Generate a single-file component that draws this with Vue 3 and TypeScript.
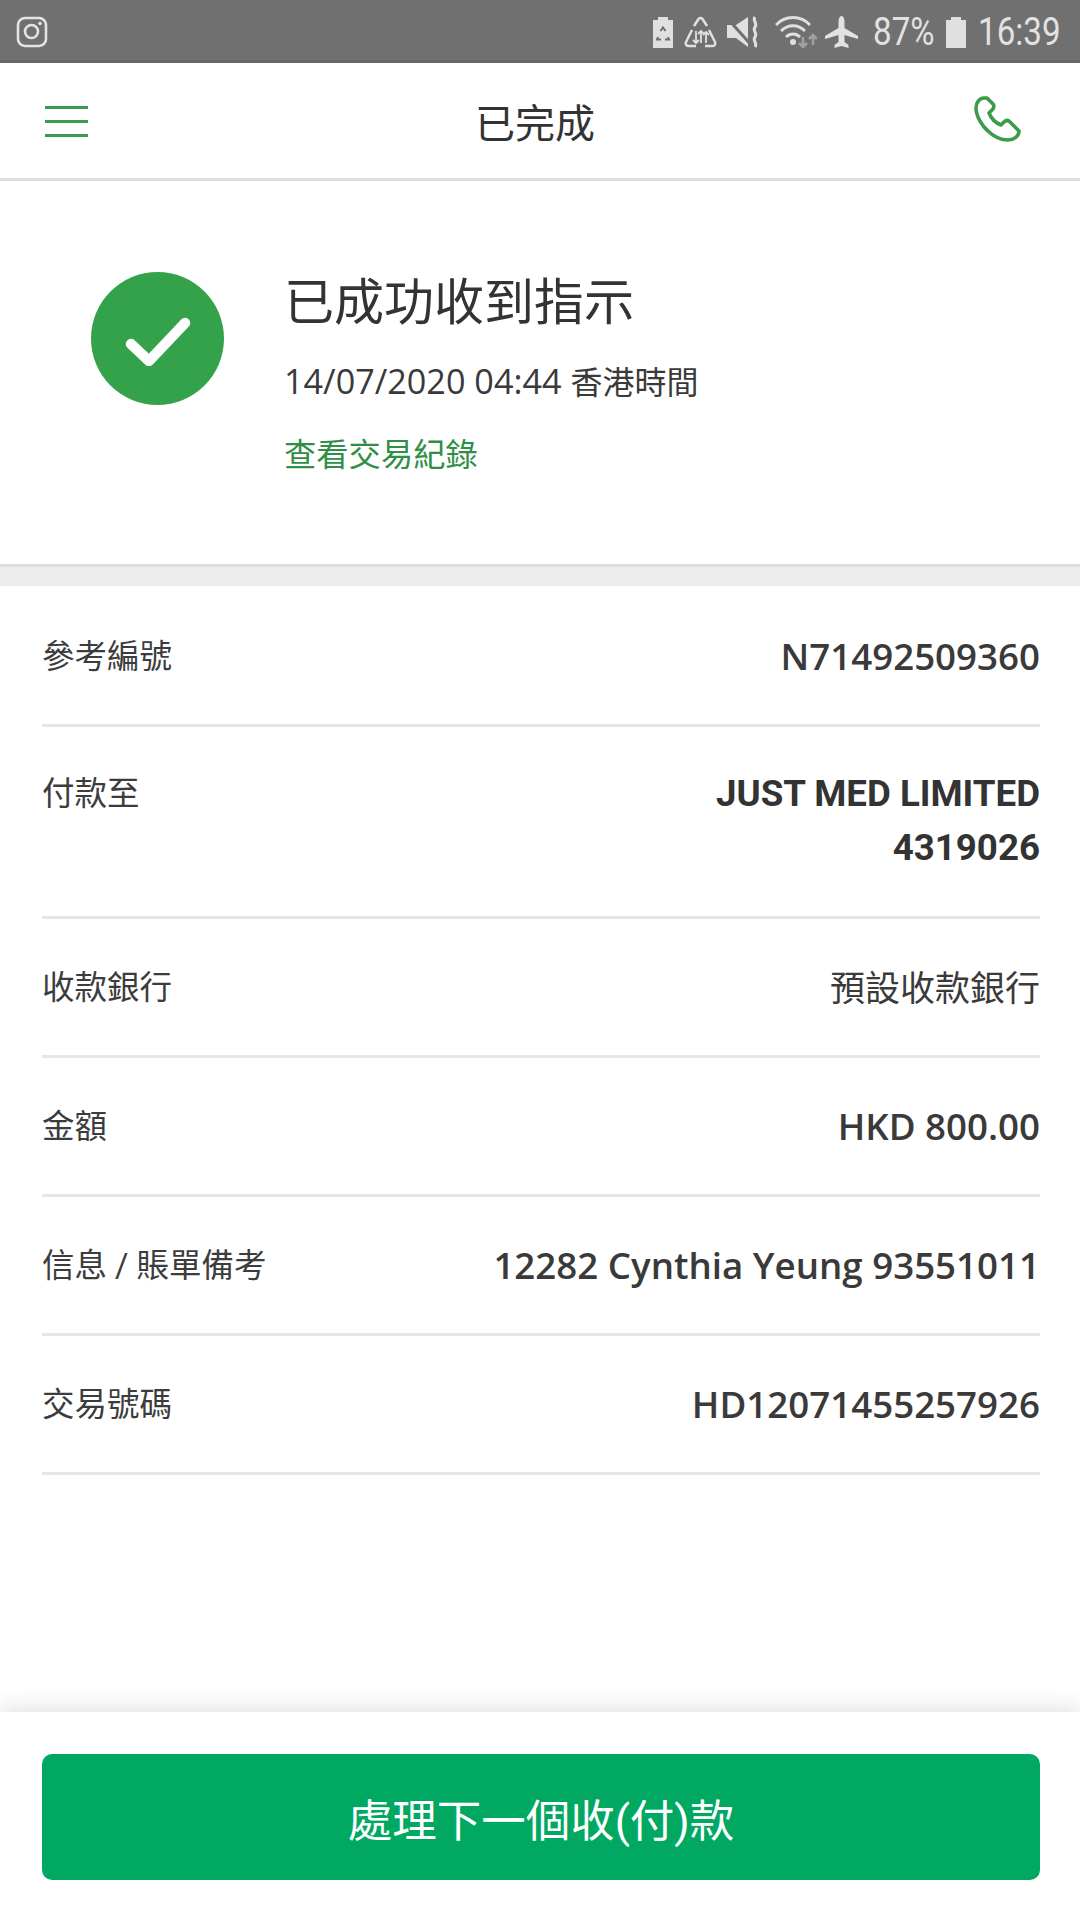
<template>
  <div class="page">
    <!-- status bar -->
    <div class="status">
      <svg class="insta" width="32" height="32" viewBox="0 0 32 32" fill="none" stroke="#e4e4e4">
        <rect x="2" y="2" width="28" height="28" rx="7" stroke-width="2.6" />
        <circle cx="15.5" cy="15.5" r="6.5" stroke-width="2.6" />
        <circle cx="24" cy="7.5" r="1.8" fill="#e4e4e4" stroke="none" />
      </svg>
      <div class="status-right">
        <svg class="ico-batt" width="22" height="32" viewBox="0 0 22 32">
          <path d="M1 4h5V1h10v3h5v28H1z" fill="#e0e0e0" />
          <path d="M8.500 15l2.500-3.500 2.500 3.500M6 21l-1 2.500h4M16 21l1 2.500h-4" stroke="#6f6f6f" stroke-width="2" fill="none" />
        </svg>
        <svg class="ico-rec" width="33" height="32" viewBox="0 0 33 32" fill="none" stroke="#e0e0e0" stroke-width="2.500" stroke-linejoin="round">
          <path d="M10 10l4.500-7q2-2 4 0l4.500 7M8 14L2 26q-1 4 3 4h7M25 14l6 12q1 4-3 4h-7" />
          <path d="M12 15v12M9 24l3 3 3-3M17 27V15M14 18l3-3 3 3M22 27V16M19 19l3-3 3 3" stroke-width="1.800" />
        </svg>
        <svg class="ico-mute" width="33" height="32" viewBox="0 0 33 32">
          <path d="M0 9h9l12-8v30l-12-9H0z" fill="#e0e0e0" />
          <path d="M1 3l25 28" stroke="#707070" stroke-width="3" />
          <path d="M28 1c-3 4 3 6 0 10s3 6 0 10 3 6 0 10" stroke="#e0e0e0" stroke-width="3" fill="none" />
        </svg>
        <svg class="ico-wifi" width="42" height="32" viewBox="0 0 42 32" fill="none">
          <path d="M1 9c9-10 25-10 34 0M6 15c7-7 17-7 24 0M11 21c4-4 10-4 14 0" stroke="#e0e0e0" stroke-width="2.800" />
          <circle cx="18" cy="26" r="3" fill="#e0e0e0" />
          <path d="M28 21v10M24 27l4 4 4-4M38 29V19M34 23l4-4 4 4" stroke="#a0a0a0" stroke-width="2.600" />
        </svg>
        <svg class="ico-plane" width="33" height="32" viewBox="0 0 33 32">
          <path d="M16.500 0c2 0 3 3 3 6v6l13.500 8v3l-13.500-4v7l4 3v3l-7-2-7 2v-3l4-3v-7L0 23v-3l13.500-8V6c0-3 1-6 3-6z" fill="#e2e2e2" />
        </svg>
        <span class="status-text pct">87%</span>
        <svg class="ico-level" width="22" height="32" viewBox="0 0 22 32">
          <path d="M1 4h5V1h10v3h5v28H1z" fill="#e0e0e0" />
        </svg>
        <span class="status-text clock">16:39</span>
      </div>
    </div>

    <!-- header -->
    <div class="topbar">
      <div class="burger"><i></i><i></i><i></i></div>
      <div class="topbar-title">已完成</div>
      <svg class="phone" width="47" height="47" viewBox="0 0 47 47" fill="none" stroke="#3a9c4a" stroke-width="3.600" stroke-linejoin="round">
        <path d="M10 2C6 2 2 6 2 12c0 8 6 18 12 23 6 6 14 9 20 9s11-4 11-9l-9-9c-2-2-4-2-6 0l-3 3c-5-2-10-7-12-12l4-4c1-2 1-4 0-5l-6-6c-1 0-2 0-3 0z" />
      </svg>
    </div>

    <!-- result -->
    <div class="result">
      <div class="tick">
        <svg width="66" height="49" viewBox="0 0 66 49" fill="none" stroke="#fff" stroke-width="10.500" stroke-linecap="round" stroke-linejoin="round">
          <path d="M6 27l18 17L60 6" />
        </svg>
      </div>
      <div class="result-text">
        <div class="result-title">已成功收到指示</div>
        <div class="result-date">14/07/2020 04:44 <span class="tz">香港時間</span></div>
        <div class="result-link">查看交易紀錄</div>
      </div>
    </div>

    <div class="band"></div>

    <!-- details -->
    <div class="rows">
      <div v-for="row in rows" :key="row.label" class="row" :class="row.kind">
        <div class="label">{{ row.label }}</div>
        <div class="value">
          <div v-for="line in row.lines" :key="line">{{ line }}</div>
        </div>
      </div>
    </div>

    <!-- footer -->
    <div class="foot">
      <button class="next" type="button">處理下一個收(付)款</button>
    </div>
  </div>
</template>

<script setup lang="ts">
interface Row {
  label: string
  lines: string[]
  kind?: 'strong' | 'plain'
}

const rows: Row[] = [
  { label: '參考編號', lines: ['N71492509360'] },
  { label: '付款至', lines: ['JUST MED LIMITED', '4319026'], kind: 'strong' },
  { label: '收款銀行', lines: ['預設收款銀行'], kind: 'plain' },
  { label: '金額', lines: ['HKD 800.00'] },
  { label: '信息 / 賬單備考', lines: ['12282 Cynthia Yeung 93551011'] },
  { label: '交易號碼', lines: ['HD12071455257926'] },
]
</script>

<style>
html,
body {
  margin: 0;
  background: #fff;
}
</style>

<style scoped>
.page {
  width: 1080px;
  height: 1920px;
  display: flex;
  flex-direction: column;
  overflow: hidden;
  background: #fff;
  color: #333;
  font-family: Roboto, "Noto Sans CJK TC", sans-serif;
}

.status {
  height: 63px;
  flex: none;
  background: #707070;
  border-bottom: 3px solid #686868;
  display: flex;
  align-items: center;
  justify-content: space-between;
  padding: 3px 20px 0 16px;
  box-sizing: border-box;
}

.status-right {
  display: flex;
  align-items: center;
}

.status svg {
  flex: none;
}

.ico-rec,
.ico-mute {
  margin-left: 10px;
}

.ico-wifi {
  margin-left: 15px;
}

.ico-plane {
  margin-left: 8px;
}

.ico-level {
  margin-left: 12px;
}

.status-text {
  display: inline-block;
  color: #e2e2e2;
  font-size: 39px;
  line-height: 40px;
  white-space: nowrap;
  transform: scaleX(0.85);
  transform-origin: left center;
}

.pct {
  width: 60px;
  margin-left: 15px;
}

.clock {
  width: 82px;
  margin-left: 11px;
}

.topbar {
  height: 118px;
  flex: none;
  display: flex;
  align-items: center;
  justify-content: space-between;
  box-sizing: border-box;
  border-bottom: 3px solid #dedede;
  padding: 0 59px 0 45px;
}

.burger {
  width: 43px;
  display: flex;
  flex-direction: column;
  gap: 11px;
  margin-top: 1px;
}

.burger i {
  display: block;
  height: 3px;
  background: #3a9c4a;
}

.topbar-title {
  font-size: 40px;
  color: #333;
  margin-left: 8px;
}

.phone {
  margin-top: -3px;
}

.result {
  height: 383px;
  flex: none;
  display: flex;
  box-sizing: border-box;
  padding: 91px 0 0 91px;
}

.tick {
  width: 133px;
  height: 133px;
  border-radius: 50%;
  background: #34a24a;
  display: flex;
  align-items: center;
  justify-content: center;
}

.tick svg {
  margin-top: 6px;
}

.result-text {
  margin-left: 60px;
  margin-top: -4px;
}

.result-title {
  font-size: 50px;
  line-height: 70px;
  color: #333;
}

.result-date {
  font-family: "Open Sans", "Noto Sans CJK TC", sans-serif;
  font-size: 34.200px;
  line-height: 48px;
  margin-top: 19px;
  color: #3a3a3a;
}

.tz {
  font-size: 32px;
}

.result-link {
  font-size: 32.300px;
  line-height: 46px;
  margin-top: 26px;
  color: #2f8f45;
}

.band {
  height: 22px;
  flex: none;
  box-sizing: border-box;
  background: #ececec;
  border-top: 3px solid #dcdcdc;
}

.rows {
  flex: 1;
  padding: 2px 40px 0 42px;
}

.row {
  display: flex;
  justify-content: space-between;
  padding: 46px 0 30px;
  border-bottom: 3px solid #e6e6e6;
  min-height: 60px;
  font-size: 32.500px;
}

.label {
  color: #3c3c3c;
  line-height: 46px;
}

.value {
  text-align: right;
  font-family: "Open Sans", "Noto Sans CJK TC", sans-serif;
  font-size: 36.700px;
  font-weight: 600;
  line-height: 46px;
  margin-top: -1px;
  color: #3a3a3a;
}

.row.plain .value {
  font-size: 35px;
  font-weight: 400;
  margin-top: 0;
}

.row.strong {
  padding-bottom: 41px;
}

.row.strong .label {
  margin-top: -2px;
}

.row.strong .value {
  font-family: Roboto, sans-serif;
  font-weight: 700;
  line-height: 54px;
  margin-top: -6px;
  color: #333;
}

.foot {
  height: 208px;
  flex: none;
  box-sizing: border-box;
  padding: 42px 40px 40px 42px;
  background: #fff;
  box-shadow: 0 -6px 20px rgba(0, 0, 0, 0.1);
}

.next {
  display: block;
  width: 100%;
  height: 126px;
  border: none;
  border-radius: 10px;
  background: #00a862;
  color: #fff;
  font-size: 44.500px;
  font-family: Roboto, "Noto Sans CJK TC", sans-serif;
}
</style>
